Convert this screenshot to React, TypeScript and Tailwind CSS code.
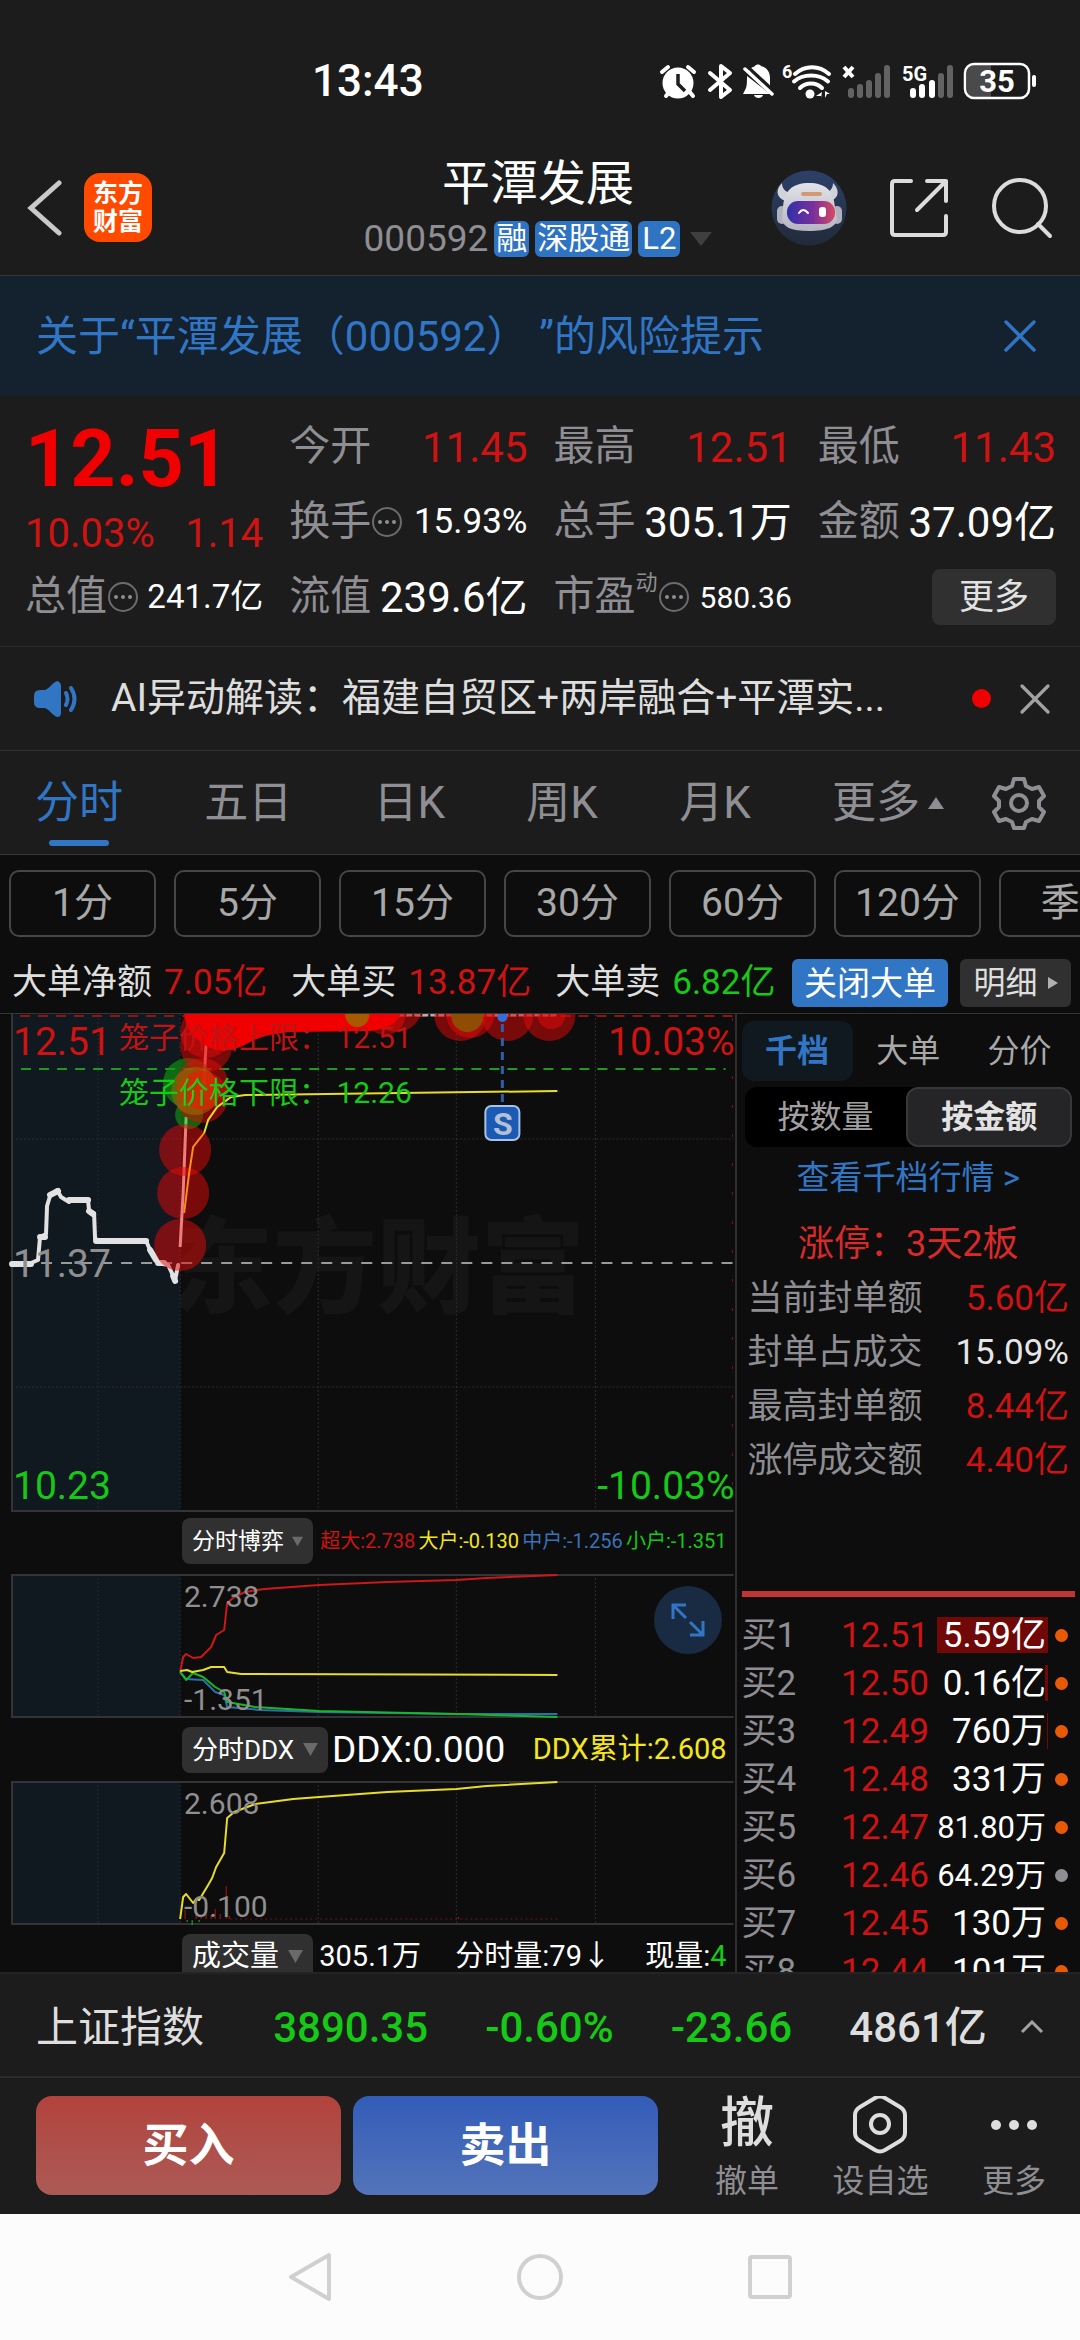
import { useState } from "react";
import { X } from "lucide-react";

const FONT = "font-['Roboto','Noto_Sans_CJK_SC',sans-serif]";

const PERIODS = ["1分", "5分", "15分", "30分", "60分", "120分", "季K"];
const TABS = ["分时", "五日", "日K", "周K", "月K"];

const LIMIT_ROWS = [
  { label: "当前封单额", value: "5.60亿", color: "text-[#cf1212]" },
  { label: "封单占成交", value: "15.09%", color: "text-[#e6e6e6]" },
  { label: "最高封单额", value: "8.44亿", color: "text-[#cf1212]" },
  { label: "涨停成交额", value: "4.40亿", color: "text-[#cf1212]" },
];

const BIDS = [
  { level: "买1", price: "12.51", amount: "5.59亿", share: 100 },
  { level: "买2", price: "12.50", amount: "0.16亿", share: 3 },
  { level: "买3", price: "12.49", amount: "760万", share: 1 },
  { level: "买4", price: "12.48", amount: "331万", share: 0 },
  { level: "买5", price: "12.47", amount: "81.80万", share: 0 },
  { level: "买6", price: "12.46", amount: "64.29万", share: 0, idle: true },
  { level: "买7", price: "12.45", amount: "130万", share: 0 },
  { level: "买8", price: "12.44", amount: "101万", share: 0 },
];

function StatusBar() {
  return (
    <div className="flex h-[140px] items-center pl-[312px] pr-[43px] pt-[22px]">
      <span className="text-[44px] font-medium leading-none text-white">13:43</span>
      <svg viewBox="0 0 380 40" className="ml-auto h-10 w-[380px]" fill="none">
        {/* alarm */}
        <g stroke="#fff" strokeWidth="4" strokeLinecap="round">
          <path d="M5 11 11 6M37 11 31 6M9 35l4-5M36 35l-4-5" />
        </g>
        <circle cx="21" cy="22" r="15.5" fill="#fff" />
        <path d="M21 13v10l7 7" stroke="#1c1c1c" strokeWidth="3.5" />
        {/* bluetooth */}
        <path
          d="m53 12 20 17-9 7V5l9 7-20 17"
          stroke="#fff"
          strokeWidth="4"
          strokeLinejoin="round"
          strokeLinecap="round"
        />
        {/* muted bell */}
        <path
          d="M92 9c2-3 5-3 6-4 1-2 5-2 6 0 7 2 9 7 9 12v8l-21-16ZM90 15l23 18H86l3-6c1-3 1-8 1-12Z"
          fill="#fff"
        />
        <path d="m90 5 27 25" stroke="#1c1c1c" strokeWidth="3" />
        <path d="m88 8 27 25" stroke="#fff" strokeWidth="3.5" strokeLinecap="round" />
        <path d="M97 34h9c-1 4-8 4-9 0Z" fill="#fff" />
        {/* wifi */}
        <text x="125" y="17" fill="#fff" fontSize="18" fontWeight="700">
          6
        </text>
        <g stroke="#fff" strokeWidth="4" strokeLinecap="round">
          <path d="M138 13c10-9 24-9 34 0M137 20.500c9-8 25-8 34 0M143 27c6-6 16-6 22 0" />
        </g>
        <circle cx="153" cy="33" r="4.500" fill="#fff" />
        <path d="m165 31-6 4h5v2M168 37v-7l5 3h-3" fill="#fff" />
        {/* sim 1, no service */}
        <path d="m187 6 9 10M196 6l-9 10" stroke="#fff" strokeWidth="4" />
        <g stroke="#636363" strokeWidth="6" strokeLinecap="round">
          <path d="M194 30v4M203 26v8M212 22v12M221 15v19M230 7v27" />
        </g>
        {/* sim 2 */}
        <text x="245" y="20" fill="#fff" fontSize="20" fontWeight="700">
          5G
        </text>
        <g stroke="#fff" strokeWidth="6" strokeLinecap="round">
          <path d="M256 30v4M265 26v8M275 22v12" />
        </g>
        <g stroke="#636363" strokeWidth="6" strokeLinecap="round">
          <path d="M284 15v19M293 7v27" />
        </g>
        {/* battery */}
        <path d="M318 4h16v32h-16q-8 0-8-8V12q0-8 8-8Z" fill="#4a4a4a" />
        <rect x="308" y="3" width="64" height="34" rx="9" stroke="#fff" strokeWidth="2.500" />
        <rect x="375" y="14" width="4" height="12" rx="2" fill="#fff" />
        <text x="340" y="31" fill="#fff" fontSize="31" fontWeight="700" textAnchor="middle">
          35
        </text>
      </svg>
    </div>
  );
}

function RobotAvatar() {
  return (
    <svg viewBox="0 0 76 76" className="h-[76px] w-[76px]">
      <defs>
        <linearGradient id="sky" x1="0" y1="0" x2="0" y2="1">
          <stop offset="0" stopColor="#2c4068" />
          <stop offset="1" stopColor="#222a3a" />
        </linearGradient>
        <linearGradient id="visor" x1="0" y1="0" x2="1" y2="0">
          <stop offset="0" stopColor="#3030a8" />
          <stop offset="0.55" stopColor="#7a2f9c" />
          <stop offset="1" stopColor="#d64a62" />
        </linearGradient>
        <linearGradient id="shell" x1="0" y1="0" x2="0" y2="1">
          <stop offset="0" stopColor="#e2e2e8" />
          <stop offset="1" stopColor="#b4b5c0" />
        </linearGradient>
      </defs>
      <circle cx="38" cy="38" r="37.500" fill="url(#sky)" />
      <path
        d="M11 13c-8 8-4 16 4 18l8-8c-7 0-12-3-12-10ZM62 13c8 8 5 16-3 18l-8-8c6 0 11-3 11-10Z"
        fill="#d2d2da"
      />
      <rect x="6" y="36" width="10" height="18" rx="5" fill="#b0b1be" />
      <rect x="61" y="36" width="10" height="18" rx="5" fill="#b0b1be" />
      <path
        d="M12 38C13 20 22 13 38 13s25 7 26 25l2 10c0 9-10 13-28 13s-27-4-27-13Z"
        fill="url(#shell)"
      />
      <rect x="30" y="22" width="21" height="4" rx="2" fill="#d29a74" />
      <rect x="16" y="31" width="48" height="23" rx="11" fill="url(#visor)" />
      <path d="M28 43q4-6 9 0" stroke="#fff" strokeWidth="2" fill="none" strokeLinecap="round" />
      <rect x="48" y="37" width="7" height="10" rx="3" fill="#fff" />
    </svg>
  );
}

function Header() {
  return (
    <header className="flex h-[136px] items-center justify-between border-b border-[#33373a] px-[27px]">
      <div className="flex w-[326px] items-center gap-[21px]">
        <button aria-label="返回">
          <svg viewBox="0 0 36 56" className="h-14 w-9" fill="none">
            <path d="M32 3 4 28l28 25" stroke="#c9c9c9" strokeWidth="5" strokeLinecap="round" />
          </svg>
        </button>
        <div className="flex h-[69px] w-[68px] flex-col items-center justify-center rounded-2xl bg-[#ff4a00] text-[25px] font-bold leading-7 text-white">
          <span>东方</span>
          <span>财富</span>
        </div>
      </div>
      <div className="flex flex-col items-center gap-[7px] pb-1">
        <h1 className="text-[48px] leading-[60px] text-white">平潭发展</h1>
        <div className="flex items-center gap-[6px] text-[31px] leading-9 text-white">
          <span className="text-[37px] text-[#8e8e93]">000592</span>
          <span className="rounded-md bg-[#2f73c3] px-[2px]">融</span>
          <span className="rounded-md bg-[#2f73c3] px-[2px]">深股通</span>
          <span className="rounded-md bg-[#2f73c3] px-1">L2</span>
          <svg viewBox="0 0 22 14" className="ml-1 h-[14px] w-[22px]">
            <path d="M0 0h22L11 14Z" fill="#3f3f3f" />
          </svg>
        </div>
      </div>
      <div className="flex w-[330px] items-center justify-end gap-[42px]">
        <button aria-label="智能助手">
          <RobotAvatar />
        </button>
        <button aria-label="分享">
          <svg viewBox="0 0 60 60" className="h-[60px] w-[60px]" fill="none" stroke="#dcdcdc" strokeWidth="4" strokeLinecap="round" strokeLinejoin="round">
            <path d="M22 3H6Q3 3 3 6v48q0 3 3 3h48q3 0 3-3V38" />
            <path d="M38 3h19v20M57 3 28 32" />
          </svg>
        </button>
        <button aria-label="搜索">
          <svg viewBox="0 0 62 62" className="h-[62px] w-[62px]" fill="none" stroke="#dcdcdc" strokeWidth="4" strokeLinecap="round">
            <circle cx="29" cy="29" r="26" />
            <path d="m47 47 12 12" />
          </svg>
        </button>
      </div>
    </header>
  );
}

function InfoDot() {
  return (
    <svg viewBox="0 0 32 32" className="h-8 w-8 shrink-0">
      <circle cx="16" cy="16" r="14" fill="none" stroke="#6c6c70" strokeWidth="2" />
      <g fill="#8e8e93">
        <circle cx="9" cy="16" r="2" />
        <circle cx="16" cy="16" r="2" />
        <circle cx="23" cy="16" r="2" />
      </g>
    </svg>
  );
}

type QuoteProps = {
  label: string;
  value: string;
  valueClass: string;
  info?: boolean;
  sup?: string;
};

function Quote({ label, value, valueClass, info, sup }: QuoteProps) {
  return (
    <div className="flex h-[74px] items-center justify-between whitespace-nowrap">
      <span className="flex items-center text-[41px] text-[#8e8e93]">
        {label}
        {sup && <span className="pb-7 text-[22px] leading-none">{sup}</span>}
        {info && <InfoDot />}
      </span>
      <span className={valueClass}>{value}</span>
    </div>
  );
}

function QuotePanel() {
  return (
    <section className="grid grid-cols-4 gap-x-[26px] border-b border-[#2b2b2b] pb-3 pl-[25px] pr-6 pt-[14px]">
      <div className="row-span-2 flex flex-col text-[#cf1212]">
        <span className="text-[79px] font-bold leading-[98px] text-[#f00000]">12.51</span>
        <span className="flex justify-between text-[40px] leading-[52px]">
          <span>10.03%</span>
          <span>1.14</span>
        </span>
      </div>
      <Quote label="今开" value="11.45" valueClass="text-[42px] text-[#cf1212]" />
      <Quote label="最高" value="12.51" valueClass="text-[42px] text-[#cf1212]" />
      <Quote label="最低" value="11.43" valueClass="text-[42px] text-[#cf1212]" />
      <Quote label="换手" value="15.93%" valueClass="text-[35px] text-white" info />
      <Quote label="总手" value="305.1万" valueClass="text-[42px] text-white" />
      <Quote label="金额" value="37.09亿" valueClass="text-[42px] text-white" />
      <Quote label="总值" value="241.7亿" valueClass="text-[33px] text-white" info />
      <Quote label="流值" value="239.6亿" valueClass="text-[42px] text-white" />
      <Quote label="市盈" value="580.36" valueClass="text-[30px] text-white" sup="动" info />
      <div className="flex items-center justify-end">
        <button className="h-14 w-[124px] rounded-lg bg-[#303030] text-[35px] leading-none text-[#e2e2e2]">
          更多
        </button>
      </div>
    </section>
  );
}

function NewsBar() {
  return (
    <section className="flex h-[104px] items-center border-b border-[#323232] pl-8 pr-[19px]">
      <svg viewBox="0 0 48 40" className="h-10 w-12 shrink-0" fill="none" stroke="#3176c4" strokeWidth="4" strokeLinecap="round">
        <path d="M25 2q4 1 4 5v27q0 4-4 4c-4-1-8-8-12-9H8q-6 0-6-6v-6q0-6 6-6h5c4-1 8-8 12-9Z" fill="#3176c4" stroke="none" />
        <path d="M34 14q3 6 0 12M39 9q7 11 0 22" />
      </svg>
      <a href="#news" className="ml-[31px] whitespace-nowrap text-[39px] text-[#dedede]">
        AI异动解读：福建自贸区+两岸融合+平潭实...
      </a>
      <span className="ml-auto h-[19px] w-[19px] rounded-full bg-[#f00000]" />
      <button aria-label="关闭解读" className="ml-[18px]">
        <X className="h-[52px] w-[52px] text-[#a2a2a2]" strokeWidth={1.5} />
      </button>
    </section>
  );
}

function ChartTabs() {
  const [active, setActive] = useState("分时");
  return (
    <nav className="flex h-[104px] items-stretch border-b border-[#363636] pl-[35px] pr-[34px] text-[44px] text-[#8e8e93]">
      <div className="flex flex-1 justify-between pr-12">
        {TABS.map((tab) => (
          <button
            key={tab}
            onClick={() => setActive(tab)}
            className={
              tab === active
                ? "relative flex items-center text-[#3176c4]"
                : "relative flex items-center"
            }
          >
            {tab}
            {tab === active && (
              <span className="absolute bottom-2 left-1/2 h-[6px] w-[60px] -translate-x-1/2 rounded-full bg-[#3176c4]" />
            )}
          </button>
        ))}
        <button className="flex items-center gap-2">
          更多
          <svg viewBox="0 0 16 12" className="h-3 w-4">
            <path d="M0 12h16L8 0Z" fill="#8e8e93" />
          </svg>
        </button>
      </div>
      <button aria-label="图表设置">
        <svg viewBox="0 0 54 54" className="h-[54px] w-[54px]" fill="none" stroke="#8e8e93" strokeWidth="4" strokeLinejoin="round">
          <path d="M22 3h10l2 7 6 3 7-2 5 9-5 5v6l5 5-5 9-7-2-6 3-2 6H22l-2-6-6-3-7 2-5-9 5-5v-6l-5-5 5-9 7 2 6-3Z" />
          <circle cx="27" cy="27" r="8" />
        </svg>
      </button>
    </nav>
  );
}

function PeriodRow() {
  return (
    <div className="flex gap-[18px] overflow-hidden px-[9px] pt-[15px]">
      {PERIODS.map((p) => (
        <button
          key={p}
          className="h-[67px] w-[147px] shrink-0 rounded-[10px] border-2 border-[#464646] text-[39px] leading-none text-[#a8a8a8]"
        >
          {p}
        </button>
      ))}
    </div>
  );
}

function BigOrderRow() {
  return (
    <div className="mt-5 flex h-[57px] items-center whitespace-nowrap border-b border-[#363636] pb-1 pl-3 pr-[9px] text-[35px] text-[#dedede]">
      <span>大单净额</span>
      <span className="ml-3 text-[#cf1212]">7.05亿</span>
      <span className="ml-6">大单买</span>
      <span className="ml-3 text-[#cf1212]">13.87亿</span>
      <span className="ml-6">大单卖</span>
      <span className="ml-3 text-[#16c916]">6.82亿</span>
      <button className="ml-auto h-12 w-[156px] rounded-md bg-[#3176c4] text-[33px] leading-none text-white">
        关闭大单
      </button>
      <button className="ml-3 flex h-12 w-[111px] items-center justify-center gap-[10px] rounded-md bg-[#303030] text-[32px] leading-none">
        明细
        <svg viewBox="0 0 10 12" className="h-3 w-[10px]">
          <path d="M0 0v12l10-6Z" fill="#b0b0b0" />
        </svg>
      </button>
    </div>
  );
}

function VerticalGrid({ height }: { height: number }) {
  return (
    <g stroke="#2b2d31" strokeWidth="1" strokeDasharray="2 2">
      {[98, 180, 318, 456, 595].map((x) => (
        <line key={x} x1={x} x2={x} y1="0" y2={height} />
      ))}
    </g>
  );
}

function PriceChart() {
  return (
    <div className="relative h-[498px] overflow-hidden text-[39px] leading-none">
      <div className="absolute inset-x-0 top-[192px] pl-[23%] text-[104px] font-black leading-[128px] text-[#151515]">
        东方财富
      </div>
      <span className="absolute left-[119px] top-[9px] z-10 whitespace-pre text-[30px] text-[#c01414]">
        笼子价格上限： 12.51
      </span>
      <svg viewBox="0 0 734 498" preserveAspectRatio="none" className="absolute inset-0 h-full w-full" fill="none">
        <rect x="12" y="0" width="168" height="497" fill="#101820" />
        <VerticalGrid height={497} />
        <path d="M12 125h721M12 373h721" stroke="#2b2d31" strokeDasharray="2 2" />
        <path d="M12 0v497h721" stroke="#333338" strokeWidth="2" />
        <path d="M20 2h713" stroke="#8f1414" strokeWidth="2" strokeDasharray="10 8" />
        <path d="M21 249h712" stroke="#9a9a9a" strokeWidth="2" strokeDasharray="11 9" />
        <path d="M21 55h704" stroke="#1f9a1f" strokeWidth="2" strokeDasharray="10 8" />

        {/* call auction */}
        <path
          d="M12 251 31 249 38 246 40 223 46 220 47 192 50 182 57 176 61 183 69 188 71 186 88 186 89 197 94 199 95 225 101 227 146 227 150 236 158 249 168 251 175 266 178 251"
          stroke="#e2e2e2"
          strokeWidth="4"
          strokeLinejoin="round"
          strokeLinecap="round"
        />
        <path
          d="M12 250h19M69 186h19M96 227h50M40 223h5M50 181l8-4M89 197l4 3M150 236l6 10M158 249h6M173 262l2 5"
          stroke="#e2e2e2"
          strokeWidth="6"
          strokeLinecap="round"
        />

        {/* price */}
        <path d="M180 233 183 179 186 103M203 83 206 29" stroke="#f4f4f4" strokeWidth="3" />
        <path d="M278 1h279" stroke="#b9a9a9" strokeWidth="3" strokeDasharray="6 2" />

        {/* big orders */}
        <g fill="#0fa00f" fillOpacity="0.6">
          <circle cx="188" cy="69" r="25" />
          <circle cx="189" cy="101" r="14" />
        </g>
        <g fill="#e60808" fillOpacity="0.5">
          <circle cx="180" cy="231" r="26" />
          <circle cx="183" cy="179" r="26" />
          <circle cx="185" cy="136" r="26" />
          <circle cx="202" cy="83" r="26" />
          <circle cx="202" cy="70" r="26" />
          <circle cx="206" cy="32" r="26" />
          <circle cx="206" cy="18" r="26" />
          <circle cx="385" cy="1" r="20" />
          <circle cx="396" cy="-8" r="26" />
          <circle cx="460" cy="1" r="26" />
          <circle cx="470" cy="0" r="24" />
          <circle cx="507" cy="1" r="26" />
          <circle cx="549" cy="1" r="26" />
          <circle cx="551" cy="1" r="14" />
        </g>
        <circle cx="195" cy="77" r="24" fill="#a87000" fillOpacity="0.5" />
        <circle cx="201" cy="76" r="19" fill="#e61a08" fillOpacity="0.6" />
        <path
          d="M184 0h216q-5 15-30 17l-80 1q-26 2-40 10-30 18-52-2-12-8-14-26Z"
          fill="#f00000"
        />
        <circle cx="357" cy="1" r="12" fill="#a85a00" />
        <circle cx="467" cy="2" r="16" fill="#8f4c04" />

        {/* average price */}
        <path d="M184 199 189 159 193 133 204 119" stroke="#ff8a1c" strokeWidth="2" />
        <path d="M204 119 208 106 217 93 231 83 245 81 557 77" stroke="#e8dc2a" strokeWidth="2" />

        {/* sell marker */}
        <path d="M502 10v82" stroke="#2d5ea8" strokeWidth="3" strokeDasharray="8 6" />
        <circle cx="502" cy="3" r="5" fill="#2f6fe0" />
        <rect x="485" y="92" width="34" height="34" rx="6" fill="#1b5ab4" stroke="#a9c3e6" strokeWidth="2" />
        <path d="M732 4v480" stroke="#7a1212" strokeWidth="1" strokeDasharray="3 26" />
      </svg>
      <span className="absolute left-[66%] top-[94px] w-9 text-center text-[32px] font-bold text-[#b4c0d4]">
        S
      </span>
      <span className="absolute left-[13px] top-[9px] text-[#cf1212]">12.51</span>
      <span className="absolute right-0 top-[9px] text-[#cf1212]">10.03%</span>
      <span className="absolute left-[119px] top-16 whitespace-pre text-[30px] text-[#16c916]">
        笼子价格下限： 12.26
      </span>
      <span className="absolute left-[13px] top-[231px] text-[#8f8f8f]">11.37</span>
      <span className="absolute bottom-[6px] left-[13px] text-[#16c916]">10.23</span>
      <span className="absolute bottom-[6px] right-0 text-[#16c916]">-10.03%</span>
    </div>
  );
}

function IndicatorButton({ label, size }: { label: string; size: string }) {
  return (
    <button
      className={`${size} mr-1 flex h-[46px] shrink-0 items-center gap-2 rounded-lg bg-[#303030] px-[10px] leading-none text-white`}
    >
      {label}
      <svg viewBox="0 0 16 14" className="ml-auto h-[13px] w-[15px]">
        <path d="M0 0h16L8 14Z" fill="#6a6a6a" />
      </svg>
    </button>
  );
}

function GameChart() {
  return (
    <div className="relative h-36 text-[30px] leading-none text-[#8f8f8f]">
      <svg viewBox="0 0 734 144" preserveAspectRatio="none" className="absolute inset-0 h-full w-full" fill="none">
        <rect x="12" y="0" width="168" height="143" fill="#101820" />
        <VerticalGrid height={143} />
        <path d="M733 1H12v142h721" stroke="#333338" strokeWidth="2" />
        <g strokeWidth="2" strokeLinejoin="round">
          <path
            d="M180 98 183 83 186 80 193 84 201 83 211 73 216 61 224 56 227 29 234 23 245 18 264 15 319 11 387 8 456 6 486 4 557 1"
            stroke="#cc1818"
          />
          <path d="M180 98 186 105 203 106 215 118 224 121 227 133 260 136 319 138 456 140 557 140" stroke="#2d6ea8" />
          <path
            d="M180 98 186 106 193 99 203 103 215 113 224 118 227 128 255 133 319 137 456 140 557 143"
            stroke="#16b82a"
          />
          <path d="M180 97 187 96 192 98 203 96 211 93 224 93 227 98 241 100 557 101" stroke="#e8dc2a" />
        </g>
      </svg>
      <span className="absolute left-[184px] top-2">2.738</span>
      <span className="absolute bottom-[3px] left-[184px]">-1.351</span>
      <button
        aria-label="全屏"
        className="absolute right-[13px] top-3 flex h-[68px] w-[68px] items-center justify-center rounded-full bg-[#182b42]"
      >
        <svg viewBox="0 0 36 36" className="h-9 w-9" fill="none" stroke="#3176c4" strokeWidth="3">
          <path d="M3 17V3h13M4 4l12 12M33 19v14H20M32 32 20 20" />
        </svg>
      </button>
    </div>
  );
}

function DdxChart() {
  return (
    <div className="relative h-36 text-[30px] leading-none text-[#8f8f8f]">
      <svg viewBox="0 0 734 144" preserveAspectRatio="none" className="absolute inset-0 h-full w-full" fill="none">
        <rect x="12" y="0" width="168" height="143" fill="#101820" />
        <VerticalGrid height={143} />
        <path d="M733 1H12v142h721" stroke="#333338" strokeWidth="2" />
        <path d="M185 138v-9M196 138v-4M201 138v-4M206 138v-5M211 138v-4M215 138v-10M220 138v-5M226 138v-33M229 138v-3M458 138v-2" stroke="#b01616" strokeWidth="1" />
        <path d="M230 138h327" stroke="#7a1010" strokeDasharray="2 3" />
        <path d="M187 139v2M192 139v5M199 139v2" stroke="#16b82a" />
        <path
          d="M180 138 183 116 186 113 193 122 196 118 199 119 208 104 212 97 216 86 224 72 227 37 234 31 255 23 293 18 319 16 387 11 456 8 486 5 557 1"
          stroke="#e8dc2a"
          strokeWidth="2"
          strokeLinejoin="round"
        />
      </svg>
      <span className="absolute left-[184px] top-2">2.608</span>
      <span className="absolute bottom-[3px] left-[184px]">-0.100</span>
    </div>
  );
}

function ChartColumn() {
  return (
    <div className="w-[68.2%] shrink-0 border-r-2 border-[#2e2e2e]">
      <PriceChart />
      <div className="flex h-[62px] items-center justify-between whitespace-nowrap pb-1 pl-[182px] pr-2 text-[20px]">
        <IndicatorButton label="分时博弈" size="w-[131px] text-[23px]" />
        <span className="text-[#cf1212]">超大:2.738</span>
        <span className="text-[#f5e61e]">大户:-0.130</span>
        <span className="text-[#3a72b8]">中户:-1.256</span>
        <span className="text-[#16c916]">小户:-1.351</span>
      </div>
      <GameChart />
      <div className="flex h-[63px] items-center whitespace-nowrap pl-[182px] pr-2 text-white">
        <IndicatorButton label="分时DDX" size="w-[146px] text-[26px]" />
        <span className="text-[37px]">DDX:0.000</span>
        <span className="ml-auto text-[29px] text-[#f5e61e]">DDX累计:2.608</span>
      </div>
      <DdxChart />
      <div className="flex h-[63px] items-center justify-between whitespace-nowrap pl-[182px] pr-2 text-[29px] text-white">
        <IndicatorButton label="成交量" size="w-[131px] text-[29px]" />
        <span>305.1万</span>
        <span className="ml-8">分时量:79↓</span>
        <span className="ml-8">
          现量:<span className="text-[#16c916]">4</span>
        </span>
      </div>
    </div>
  );
}

function DepthColumn() {
  return (
    <div className="min-w-0 flex-1 whitespace-nowrap px-[5px] pt-[7px]">
      <div className="flex text-[32px] leading-none text-[#a8a8a8]">
        <button className="h-[60px] flex-1 rounded-xl bg-[#101820] font-bold text-[#3176c4]">千档</button>
        <button className="h-[60px] flex-1">大单</button>
        <button className="h-[60px] flex-1">分价</button>
      </div>
      <div className="mx-[3px] mt-[6px] flex rounded-xl bg-black text-[32px] leading-none">
        <button className="h-[60px] flex-1 text-[#a0a0a0]">按数量</button>
        <button className="h-[60px] flex-1 rounded-xl border-2 border-[#38383a] bg-[#252527] font-bold text-[#e2e2e2]">
          按金额
        </button>
      </div>
      <a href="#depth" className="mt-[10px] block text-center text-[33px] leading-[42px] text-[#3176c4]">
        查看千档行情 &gt;
      </a>
      <p className="mt-6 text-center text-[36px] leading-[42px] text-[#d92a2a]">涨停：3天2板</p>
      <dl className="mt-[7px] pl-[6px] pr-[6px] text-[35px] leading-[54px]">
        {LIMIT_ROWS.map((row) => (
          <div key={row.label} className="flex justify-between">
            <dt className="text-[#8e8e93]">{row.label}</dt>
            <dd className={row.color}>{row.value}</dd>
          </div>
        ))}
      </dl>
      <div className="mt-[103px] h-[6px] bg-[#c03434]" />
      <table className="mt-[14px] w-full text-[35px] leading-none">
        <tbody>
          {BIDS.map((bid) => (
            <tr key={bid.level} className="h-12">
              <th scope="row" className="p-0 text-left font-normal text-[#8e8e93]">
                {bid.level}
              </th>
              <td className="p-0 text-right text-[#cf1212]">{bid.price}</td>
              <td className="w-[119px] p-0 pl-2">
                <div className="relative flex h-9 items-center justify-end">
                  <span className="absolute inset-y-0 right-0 bg-[#700808]" style={{ width: `${bid.share}%` }} />
                  <span
                    className={
                      bid.amount.length > 5
                        ? "relative pr-[2px] text-[31px] text-white"
                        : "relative pr-[2px] text-white"
                    }
                  >
                    {bid.amount}
                  </span>
                </div>
              </td>
              <td className="w-[27px] p-0">
                <span
                  className={
                    bid.idle
                      ? "mx-auto block h-[13px] w-[13px] rounded-full bg-[#8e8e93]"
                      : "mx-auto block h-[13px] w-[13px] rounded-full bg-[#ea5a04]"
                  }
                />
              </td>
            </tr>
          ))}
        </tbody>
      </table>
    </div>
  );
}

function IndexBar() {
  return (
    <div className="flex h-[106px] items-center justify-between whitespace-nowrap border-b-2 border-t-2 border-b-[#2c2c2c] border-t-[#242424] pl-9 pr-9 pt-1 text-[42px] text-[#16c916]">
      <span className="text-[#dedede]">上证指数</span>
      <span className="ml-3 font-medium">3890.35</span>
      <span className="font-medium">-0.60%</span>
      <span className="font-medium">-23.66</span>
      <span className="font-medium text-[#dedede]">4861亿</span>
      <button aria-label="展开指数" className="-ml-6">
        <svg viewBox="0 0 24 14" className="h-[14px] w-6" fill="none">
          <path d="m2 12 10-10 10 10" stroke="#a2a2a2" strokeWidth="3" />
        </svg>
      </button>
    </div>
  );
}

function TradeBar() {
  return (
    <div className="flex h-[136px] items-start pl-9 pr-[34px] pt-[18px] text-[32px] text-[#8e8e93]">
      <button className="h-[99px] w-[305px] rounded-2xl bg-gradient-to-b from-[#b2423c] to-[#ac5a56] text-[46px] font-bold text-white">
        买入
      </button>
      <button className="ml-3 h-[99px] w-[305px] rounded-2xl bg-gradient-to-b from-[#325cb8] to-[#5474ba] text-[46px] font-bold text-white">
        卖出
      </button>
      <div className="flex flex-1 justify-between pl-[57px] leading-10">
        <button className="flex flex-col items-center">
          <span className="h-[65px] text-[54px] font-medium leading-[56px] text-[#dedede]">撤</span>
          撤单
        </button>
        <button className="flex flex-col items-center">
          <span className="h-[65px]">
            <svg viewBox="0 0 56 62" className="h-[62px] w-14" fill="none" stroke="#dedede" strokeWidth="4">
              <path d="M23 2q5-3 10 0l15 9q5 3 5 8v18q0 5-5 8l-15 9q-5 3-10 0L8 45q-5-3-5-8V19q0-5 5-8Z" />
              <circle cx="28" cy="28" r="9" />
            </svg>
          </span>
          设自选
        </button>
        <button className="flex flex-col items-center">
          <span className="h-[65px] pt-6">
            <svg viewBox="0 0 48 10" className="h-[10px] w-12" fill="#dedede">
              <circle cx="6" cy="5" r="5" />
              <circle cx="24" cy="5" r="5" />
              <circle cx="42" cy="5" r="5" />
            </svg>
          </span>
          更多
        </button>
      </div>
    </div>
  );
}

function SystemNav() {
  return (
    <div className="flex h-[126px] items-center justify-center gap-[184px] bg-[#fcfcfc]">
      <button aria-label="系统返回">
        <svg viewBox="0 0 46 50" className="h-[50px] w-[46px]" fill="none" stroke="#d0d0d0" strokeWidth="4" strokeLinejoin="round">
          <path d="M42 3v44L4 25Z" />
        </svg>
      </button>
      <button aria-label="主屏幕">
        <svg viewBox="0 0 46 50" className="h-[50px] w-[46px]" fill="none" stroke="#d0d0d0" strokeWidth="4">
          <circle cx="23" cy="25" r="21" />
        </svg>
      </button>
      <button aria-label="最近任务">
        <svg viewBox="0 0 46 50" className="h-[50px] w-[46px]" fill="none" stroke="#d0d0d0" strokeWidth="4">
          <rect x="3" y="5" width="40" height="40" rx="2" />
        </svg>
      </button>
    </div>
  );
}

export default function App() {
  const [notice, setNotice] = useState(true);

  return (
    <div className={`${FONT} w-full overflow-hidden bg-[#1c1c1c]`}>
      <StatusBar />
      <Header />
      {notice && (
        <div className="flex h-[120px] items-center justify-between bg-[#14212f] pl-9 pr-8 text-[#3176c4]">
          <a href="#risk" className="whitespace-nowrap text-[42px]">
            关于“平潭发展（000592） ”的风险提示
          </a>
          <button aria-label="关闭提示" onClick={() => setNotice(false)}>
            <X className="h-14 w-14" strokeWidth={1.5} />
          </button>
        </div>
      )}
      <QuotePanel />
      <NewsBar />
      <ChartTabs />
      <main className="bg-[#0d0d0d]">
        <PeriodRow />
        <BigOrderRow />
        <div className="flex h-[958px] overflow-hidden">
          <ChartColumn />
          <DepthColumn />
        </div>
      </main>
      <IndexBar />
      <TradeBar />
      <SystemNav />
    </div>
  );
}
